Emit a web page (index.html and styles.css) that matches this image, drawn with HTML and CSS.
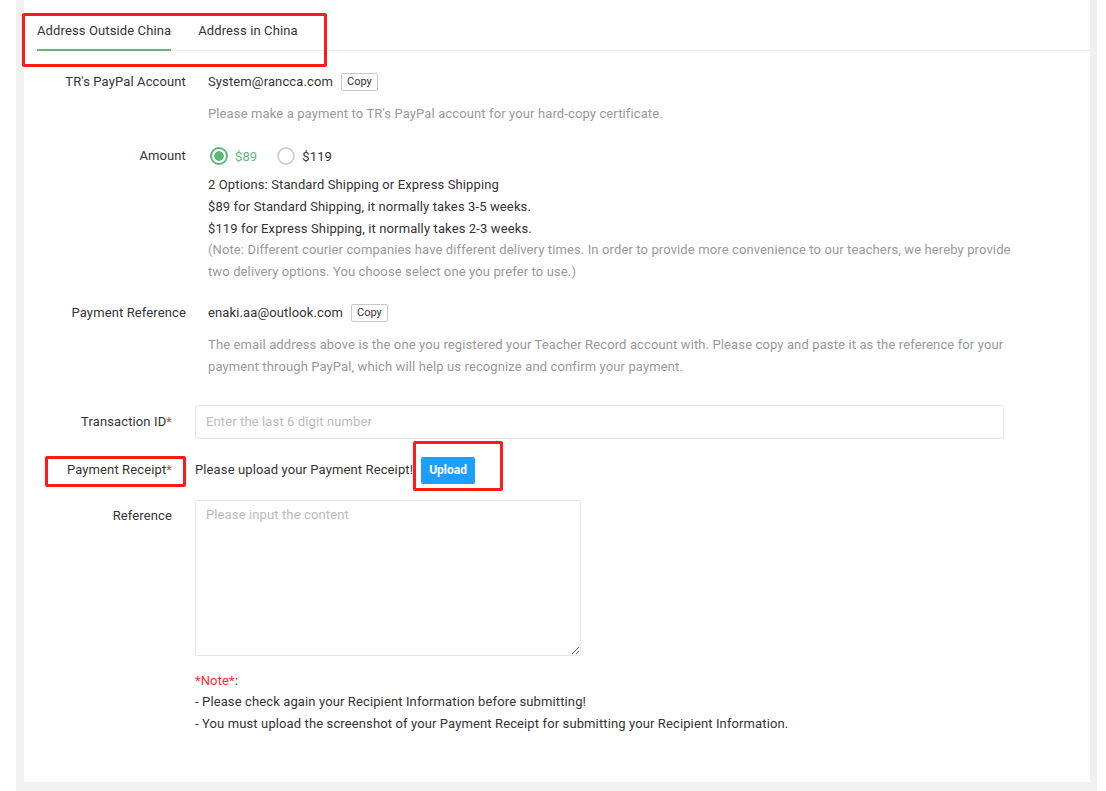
FILE: index.html
```html
<!DOCTYPE html>
<html lang="en">
<head>
  <meta charset="UTF-8">
  <title>Payment</title>
  <link rel="stylesheet" href="styles.css">
</head>
<body>
  <div class="frame">
    <div class="card">
      <div class="tabs">
        <div class="tab active">Address Outside China</div>
        <div class="tab">Address in China</div>
      </div>

      <div class="info">
        <div class="row">
          <div class="label">TR's PayPal Account</div>
          <div class="value">
            <div class="line">System@rancca.com <button class="copy">Copy</button></div>
            <div class="hint">Please make a payment to TR's PayPal account for your hard-copy certificate.</div>
          </div>
        </div>

        <div class="row amount-row">
          <div class="label">Amount</div>
          <div class="value">
            <div class="radios">
              <label class="radio checked"><span class="dot"></span>$89</label>
              <label class="radio"><span class="dot"></span>$119</label>
            </div>
            <div class="options">
              <div>2 Options: Standard Shipping or Express Shipping</div>
              <div>$89 for Standard Shipping, it normally takes 3-5 weeks.</div>
              <div>$119 for Express Shipping, it normally takes 2-3 weeks.</div>
              <div class="muted">(Note: Different courier companies have different delivery times. In order to provide more convenience to our teachers, we hereby provide two delivery options. You choose select one you prefer to use.)</div>
            </div>
          </div>
        </div>

        <div class="row ref-row">
          <div class="label">Payment Reference</div>
          <div class="value">
            <div class="line">enaki.aa@outlook.com <button class="copy">Copy</button></div>
            <div class="hint">The email address above is the one you registered your Teacher Record account with. Please copy and paste it as the reference for your payment through PayPal, which will help us recognize and confirm your payment.</div>
          </div>
        </div>
      </div>

      <form class="form">
        <div class="field">
          <div class="flabel">Transaction ID<span class="req">*</span></div>
          <input class="input" type="text" placeholder="Enter the last 6 digit number">
        </div>
        <div class="field upload-field">
          <div class="flabel">Payment Receipt<span class="req">*</span></div>
          <div class="upload-text">Please upload your Payment Receipt!</div>
          <button type="button" class="upload">Upload</button>
        </div>
        <div class="field ref-field">
          <div class="flabel">Reference</div>
          <textarea class="textarea" placeholder="Please input the content"></textarea>
        </div>
        <div class="field note-field">
          <div class="flabel"></div>
          <div class="note">
            <div><span class="req">*Note*</span>:</div>
            <div>- Please check again your Recipient Information before submitting!</div>
            <div>- You must upload the screenshot of your Payment Receipt for submitting your Recipient Information.</div>
          </div>
        </div>
      </form>
    </div>
  </div>

  <div class="mark mark-tabs"></div>
  <div class="mark mark-receipt"></div>
  <div class="mark mark-upload"></div>
</body>
</html>
```

FILE: styles.css
```css
body {
  margin: 0;
  background: #fff;
  font-family: Roboto, 'Noto Sans', sans-serif;
  font-size: 13px;
  letter-spacing: 0.12px;
  color: #333;
}

.frame {
  margin-left: 16px;
  width: 1081px;
  height: 791px;
  background: #f0f0f0;
  padding: 0 7px 0 8px;
  box-sizing: border-box;
}

.card {
  background: #fff;
  height: 782px;
  position: relative;
}

.tabs {
  display: flex;
  gap: 27px;
  margin-left: 13px;
  border-bottom: 1px solid #eee;
  height: 50px;
}

.tab {
  padding-top: 21px;
  line-height: 20px;
  box-sizing: border-box;
  height: 51px;
}

.tab.active {
  border-bottom: 2px solid #5fb878;
}

.info {
  padding-top: 21px;
}

.row {
  display: flex;
}

.label {
  width: 162px;
  text-align: right;
  line-height: 20px;
  flex-shrink: 0;
  margin-right: 22px;
}

.value {
  flex: 1;
  padding-right: 62px;
}

.line {
  line-height: 20px;
  display: flex;
  align-items: center;
  gap: 8px;
}

.copy {
  font-family: inherit;
  font-size: 11px;
  color: #333;
  background: #fff;
  border: 1px solid #c9c9c9;
  border-radius: 2px;
  height: 18px;
  padding: 0 5px;
  line-height: 16px;
}

.hint {
  margin-top: 11px;
  line-height: 22px;
  color: #999;
}

.amount-row {
  margin-top: 20px;
}

.amount-row .label {
  line-height: 22px;
}

.radios {
  display: flex;
  gap: 18px;
  height: 22px;
  align-items: center;
}

.radio {
  display: flex;
  align-items: center;
  gap: 7px;
}

.dot {
  width: 18px;
  height: 18px;
  box-sizing: border-box;
  border: 2px solid #d2d2d2;
  border-radius: 50%;
  margin-left: 2px;
}

.radio.checked {
  color: #5fb878;
}

.radio.checked .dot {
  border-color: #5fb878;
  background: radial-gradient(circle, #5fb878 0 4.5px, #fff 5px);
}

.options {
  margin-top: 7px;
  line-height: 21.75px;
}

.muted {
  color: #999;
}

.ref-row {
  margin-top: 20px;
}

.form {
  margin-top: 27px;
}

.field {
  display: flex;
  align-items: center;
}

.flabel {
  width: 148px;
  flex-shrink: 0;
  text-align: right;
  margin-right: 23px;
  line-height: 20px;
}

.req {
  color: #ff2b2b;
}

.input {
  width: 809px;
  height: 34px;
  box-sizing: border-box;
  border: 1px solid #e6e6e6;
  border-radius: 3px;
  padding: 0 10px;
  font-family: inherit;
  font-size: 13px;
  letter-spacing: inherit;
}

.input::placeholder,
.textarea::placeholder {
  color: #bbb;
}

.upload-field {
  margin-top: 18px;
}

.upload-text {
  padding-bottom: 2px;
}

.upload {
  margin-left: 8px;
  height: 27px;
  padding: 0 8px;
  background: #1e9fff;
  color: #fff;
  border: none;
  border-radius: 2px;
  font-family: inherit;
  font-size: 12px;
  font-weight: bold;
}

.ref-field {
  margin-top: 16px;
  align-items: flex-start;
}

.ref-field .flabel {
  padding-top: 6px;
}

.textarea {
  width: 386px;
  height: 156px;
  box-sizing: border-box;
  border: 1px solid #e6e6e6;
  border-radius: 2px;
  padding: 6px 10px;
  font-family: inherit;
  font-size: 13px;
  letter-spacing: inherit;
  resize: both;
}

.note-field {
  margin-top: 14px;
}

.note {
  line-height: 21.5px;
}

.mark {
  position: absolute;
  border: 3px solid #ff1a1a;
  border-radius: 2px;
  box-sizing: border-box;
}

.mark-tabs {
  left: 22px;
  top: 13px;
  width: 305px;
  height: 54px;
}

.mark-receipt {
  left: 45px;
  top: 456px;
  width: 141px;
  height: 31px;
}

.mark-upload {
  left: 413px;
  top: 441px;
  width: 90px;
  height: 50px;
}
```
